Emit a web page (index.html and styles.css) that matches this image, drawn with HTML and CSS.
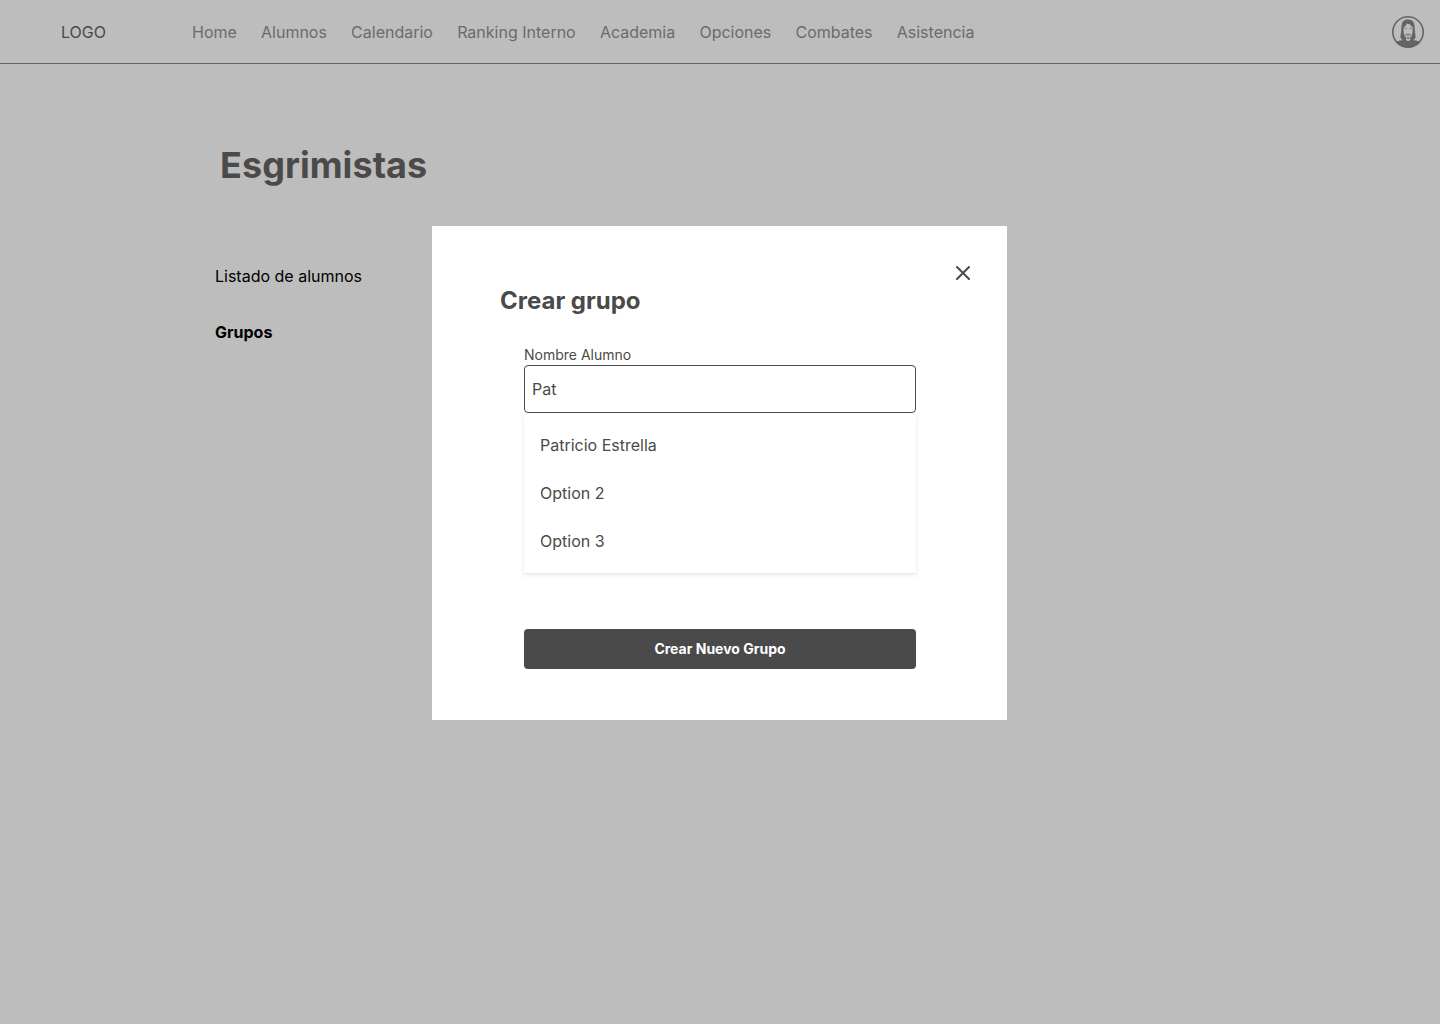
FILE: index.html
```html
<!DOCTYPE html>
<html lang="es">
<head>
<meta charset="utf-8">
<title>Esgrimistas</title>
<link rel="stylesheet" href="styles.css">
</head>
<body>
<header class="topbar">
  <div class="logo">LOGO</div>
  <nav class="nav">
    <a>Home</a><a>Alumnos</a><a>Calendario</a><a>Ranking Interno</a><a>Academia</a><a>Opciones</a><a>Combates</a><a>Asistencia</a>
  </nav>
  <svg class="avatar" viewBox="0 0 32 32" width="32" height="32" aria-label="Perfil">
    <circle cx="16" cy="16" r="15.200" fill="none" stroke="#646464" stroke-width="1.6"/>
    <path fill="#646464" d="M16.500 3.500C12.300 3 9.700 5.800 9.500 10L9 16.500c-.3 2.500-1 4-.4 5.500.5 1.100 1.300 1.700 2.400 2-2.800.6-5.200 1.100-7.400 1.900C6.500 29.500 11 31.500 16 31.500s9.500-2 12.400-5.600c-2.200-.8-4.600-1.300-7.400-1.900 1.100-.3 1.900-.9 2.400-2 .6-1.500-.1-3-.4-5.500L22.500 9.500C22.200 6 20 3.700 16.500 3.500z"/>
    <path fill="#bdbdbd" d="M15 7.500c-.5 1.500-1.800 3-3.400 4v3.800c.1 2.600.9 4.700 2.300 6.100v2.300c.6.900 1.300 1.300 2.200 1.300s1.600-.4 2.200-1.300v-2.300c1.400-1.400 2.200-3.500 2.300-6.100V11c-1.200-.3-2.100-1.600-2.700-3-.8.400-2 .2-2.900-.5z"/>
    <path fill="none" stroke="#646464" stroke-width=".8" d="M12.500 12.400h2.200M17.500 12.400h2.200M16 20.100v1.600"/>
    <path fill="none" stroke="#646464" stroke-width="1.100" d="M13.600 19.200q2.500-2 5 0"/>
    <path fill="#646464" d="M13.800 21.300q2.300 1.400 4.600 0l-.4 1q-1.900 1.200-3.800 0z"/>
  </svg>
</header>
<main class="page">
  <h1 class="title">Esgrimistas</h1>
  <aside class="side">
    <a>Listado de alumnos</a>
    <a class="active">Grupos</a>
  </aside>
</main>
<section class="modal" role="dialog" aria-modal="true">
  <button class="close" aria-label="Cerrar">
    <svg viewBox="0 0 14 14" width="14" height="14"><path d="M1 1l12 12M13 1L1 13" fill="none" stroke="#4a4a4a" stroke-width="2" stroke-linecap="round"/></svg>
  </button>
  <h2 class="modal-title">Crear grupo</h2>
  <form class="form">
    <label class="label" for="alumno">Nombre Alumno</label>
    <input class="input" id="alumno" type="text" value="Pat" autocomplete="off">
    <ul class="options">
      <li>Patricio Estrella</li>
      <li>Option 2</li>
      <li>Option 3</li>
    </ul>
    <button class="submit" type="button">Crear Nuevo Grupo</button>
  </form>
</section>
</body>
</html>
```
FILE: styles.css
```css
* { box-sizing: border-box; }
body {
  margin: 0;
  height: 1024px;
  overflow: hidden;
  background: #bdbdbd;
  color: #4a4a4a;
  font: 16px/24px Inter, "Liberation Sans", sans-serif;
}
.topbar {
  display: flex;
  align-items: center;
  height: 64px;
  padding: 0 16px 0 61px;
  border-bottom: 1px solid #646464;
}
.logo { width: 131px; }
.nav { display: flex; gap: 24.2px; color: #6b6b6b; }
.avatar { margin-left: auto; }
.page { padding: 77px 215px 0; }
.title { margin: 0; padding-left: 5px; font-size: 36px; line-height: 48px; font-weight: 700; letter-spacing: .05px; }
.side { display: flex; flex-direction: column; gap: 32px; margin-top: 75px; color: #000; }
.active { font-weight: 700; }
.modal {
  position: absolute;
  left: 432px;
  top: 226px;
  width: 575px;
  height: 494px;
  padding: 37.6px 91px 0 68px;
  background: #fff;
}
.close {
  display: block;
  width: 18px;
  height: 18px;
  margin: 0 -56px 0 auto;
  padding: 2px;
  border: 0;
  background: none;
  line-height: 0;
}
.modal-title { margin: 3.4px 0 0; font-size: 24px; line-height: 32px; font-weight: 700; }
.form { display: flex; flex-direction: column; margin: 28px 0 0 24px; }
.label { font-size: 14px; line-height: 20px; }
.input {
  width: 392px;
  height: 48px;
  padding: 0 7px;
  border: 1px solid #4a4a4a;
  border-radius: 4px;
  background: #fff;
  color: inherit;
  font: inherit;
  outline: 0;
}
.options {
  width: 392px;
  height: 160px;
  margin: 0;
  padding: 8px 16px;
  list-style: none;
  line-height: 48px;
  border-radius: 0 0 2px 2px;
  box-shadow: 0 2px 4px rgba(0, 0, 0, .1);
}
.submit {
  width: 392px;
  height: 40px;
  margin-top: 56px;
  border: 0;
  border-radius: 4px;
  background: #4a4a4a;
  color: #fff;
  font: 700 14px/20px Inter, "Liberation Sans", sans-serif;
}
```
